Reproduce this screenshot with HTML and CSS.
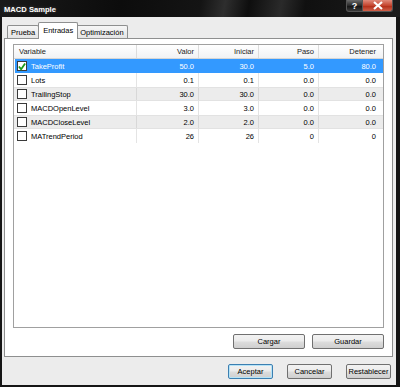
FILE: index.html
```html
<!DOCTYPE html>
<html>
<head>
<meta charset="utf-8">
<link rel="stylesheet" href="styles.css">
</head>
<body>
<div class="win">
  <div class="titlebar">
    <span class="title">MACD Sample</span>
    <div class="ctrls">
      <span class="cbtn help">?</span>
      <span class="cbtn close"><svg width="12" height="9" viewBox="0 0 12 9"><path d="M2 1 L10 8 M10 1 L2 8" stroke="#fff" stroke-width="2.2"/></svg></span>
    </div>
  </div>
  <div class="client">
    <div class="tabs">
      <span class="tab first">Prueba</span>
      <span class="tab sel">Entradas</span>
      <span class="tab">Optimización</span>
    </div>
    <div class="page">
      <div class="list">
        <div class="row head">
          <span class="c left">Variable</span>
          <span class="c">Valor</span>
          <span class="c">Iniciar</span>
          <span class="c">Paso</span>
          <span class="c last">Detener</span>
        </div>
        <div class="row selected">
          <span class="c left"><i class="cb"><svg width="9" height="9" viewBox="0 0 9 9"><path d="M1 4.5 L3.5 7.5 L8 1" fill="none" stroke="#1a9a1a" stroke-width="2"/></svg></i>TakeProfit</span>
          <span class="c">50.0</span><span class="c">30.0</span><span class="c">5.0</span><span class="c last">80.0</span>
        </div>
        <div class="row">
          <span class="c left"><i class="cb"></i>Lots</span>
          <span class="c">0.1</span><span class="c">0.1</span><span class="c">0.0</span><span class="c last">0.0</span>
        </div>
        <div class="row alt">
          <span class="c left"><i class="cb"></i>TrailingStop</span>
          <span class="c">30.0</span><span class="c">30.0</span><span class="c">0.0</span><span class="c last">0.0</span>
        </div>
        <div class="row">
          <span class="c left"><i class="cb"></i>MACDOpenLevel</span>
          <span class="c">3.0</span><span class="c">3.0</span><span class="c">0.0</span><span class="c last">0.0</span>
        </div>
        <div class="row alt">
          <span class="c left"><i class="cb"></i>MACDCloseLevel</span>
          <span class="c">2.0</span><span class="c">2.0</span><span class="c">0.0</span><span class="c last">0.0</span>
        </div>
        <div class="row">
          <span class="c left"><i class="cb"></i>MATrendPeriod</span>
          <span class="c">26</span><span class="c">26</span><span class="c">0</span><span class="c last">0</span>
        </div>
      </div>
      <div class="pagebtns">
        <span class="btn wide">Cargar</span>
        <span class="btn wide">Guardar</span>
      </div>
    </div>
    <div class="footer">
      <span class="btn def">Aceptar</span>
      <span class="btn">Cancelar</span>
      <span class="btn">Restablecer</span>
    </div>
  </div>
</div>
</body>
</html>
```

FILE: styles.css
```css
html, body {
  margin: 0;
  padding: 0;
  background: #000;
}
body {
  font-family: "Liberation Sans", Arial, sans-serif;
  font-size: 7.5px;
  color: #000;
}
.win {
  width: 400px;
  height: 387px;
  background: #151515;
  display: flex;
  flex-direction: column;
  box-sizing: border-box;
  padding-bottom: 2px;
}
.titlebar {
  height: 17px;
  flex: none;
  display: flex;
  justify-content: space-between;
  align-items: flex-start;
  background: linear-gradient(100deg, #1a1a1a 0%, #0c0c0c 30%, #141414 50%, #2e2e2e 56%, #0e0e0e 62%, #2a2a2a 70%, #101010 76%, #1c1c1c 100%);
}
.title {
  color: #fff;
  font-weight: bold;
  font-size: 7.6px;
  padding: 5px 0 0 4px;
  text-shadow: 0 0 3px rgba(255,255,255,0.25);
}
.ctrls {
  display: flex;
  margin-right: 7px;
}
.cbtn {
  height: 12px;
  display: flex;
  align-items: center;
  justify-content: center;
  color: #fff;
  font-weight: bold;
  font-size: 9px;
  border: 1px solid #555;
  border-top: none;
  box-sizing: border-box;
}
.help {
  width: 17px;
  border-radius: 0 0 0 3px;
  background: linear-gradient(#6a6a6a, #2a2a2a 50%, #111 51%, #3a3a3a);
}
.close {
  width: 30px;
  border-left: none;
  border-radius: 0 0 3px 0;
  background: linear-gradient(#e08a7a, #c5452f 50%, #b02a14 51%, #d0604a);
}
.client {
  flex: 1;
  margin: 0 4px 0 2px;
  background: #ececec;
  display: flex;
  flex-direction: column;
}
.tabs {
  display: flex;
  align-items: flex-end;
  height: 21px;
  padding-left: 5px;
  position: relative;
  z-index: 1;
}
.tab {
  height: 12px;
  border: 1px solid #8e8f8f;
  border-bottom: none;
  background: linear-gradient(#f6f6f6, #e4e4e4);
  padding: 0 3px;
  display: flex;
  align-items: center;
  margin-left: -1px;
  border-radius: 2px 2px 0 0;
}
.tab.first { margin-left: 0; }
.tab.sel {
  height: 16px;
  background: #fff;
  margin: 0 -1px 0 -1px;
  position: relative;
  z-index: 2;
  padding: 0 4px 2px;
  box-sizing: border-box;
  height: 17px;
  margin-bottom: -1px;
  align-items: center;
}
.page {
  background: #fff;
  border: 1px solid #8e8f8f;
  margin: 0 3px 0 2px;
  height: 319px;
  box-sizing: border-box;
  display: flex;
  flex-direction: column;
  padding: 5px 8px 0 8px;
}
.list {
  border: 1px solid #a0a0a0;
  height: 284px;
  box-sizing: border-box;
}
.row {
  display: grid;
  grid-template-columns: 123px 62px 60px 60px 61px;
  height: 14px;
}
.c {
  display: flex;
  align-items: center;
  justify-content: flex-end;
  padding-right: 4px;
  border-right: 1px solid #e4e4e4;
  white-space: nowrap;
}
.c.left {
  justify-content: flex-start;
  padding-left: 3px;
}
.c.last { border-right: none; }
.head {
  background: linear-gradient(#ffffff, #f1f2f4);
  border-bottom: 1px solid #d5d5d5;
  height: 14px;
  box-sizing: border-box;
  color: #222;
}
.head .c { border-right: 1px solid #dcdcdc; }
.head .c.left { padding-left: 5px; }
.head .c.last { border-right: none; }
.selected {
  background: #3399ff;
  color: #fff;
  margin-left: 1px;
  grid-template-columns: 122px 62px 60px 60px 61px;
}
.selected .c { border-right-color: #3399ff; }
.selected .c.left { padding-left: 2px; }
.alt {
  background: #ececec;
  border-top: 1px solid #e2e2e2;
  border-bottom: 1px solid #e2e2e2;
  box-sizing: border-box;
}
.alt .c { border-right-color: #d8d8d8; }
.cb {
  width: 10px;
  height: 10px;
  border: 1px solid #3a3a3a;
  background: #fff;
  box-sizing: border-box;
  margin-right: 4px;
  display: flex;
  align-items: center;
  justify-content: center;
}
.pagebtns {
  display: flex;
  justify-content: flex-end;
  gap: 7px;
  margin-top: 6px;
}
.btn {
  height: 15px;
  width: 45px;
  box-sizing: border-box;
  border: 1px solid #707070;
  border-radius: 2px;
  background: linear-gradient(#f2f2f2 0%, #ebebeb 48%, #dddddd 52%, #cfcfcf 100%);
  display: flex;
  align-items: center;
  justify-content: center;
  color: #000;
}
.btn.wide { width: 72px; }
.btn.def {
  border-color: #3c7fb1;
  box-shadow: inset 0 0 0 1px #b5e3f7;
}
.footer {
  flex: 1;
  display: flex;
  justify-content: flex-end;
  align-items: center;
  padding-right: 5px;
  gap: 14px;
}
```
